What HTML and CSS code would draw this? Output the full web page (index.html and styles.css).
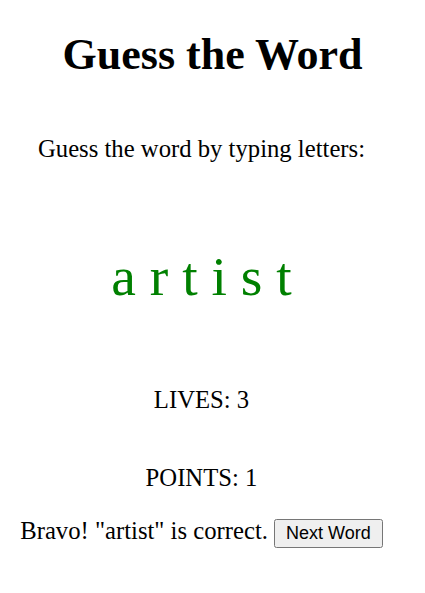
FILE: index.html
```html
<!DOCTYPE html>
<html>
<head>
<meta charset="utf-8">
<link rel="stylesheet" href="styles.css">
</head>
<body>
<div class="app">
  <h1 class="title">Guess the Word</h1>
  <div class="game">
    <p class="instructions">Guess the word by typing letters:</p>
    <div class="word">a r t i s t</div>
    <p class="lives">LIVES: 3</p>
    <p class="points">POINTS: 1</p>
    <p class="message">Bravo! "artist" is correct. <button class="next">Next Word</button></p>
  </div>
</div>
</body>
</html>
```
FILE: styles.css
```css
body {
  margin: 8px;
  font-family: "Liberation Serif", "Times New Roman", serif;
  background: #fff;
  color: #000;
}
.app {
  text-align: center;
}
.title {
  font-size: 44px;
  font-weight: bold;
  line-height: 50px;
  margin: 22px 0 0;
}
.game {
  margin-right: 22px;
  font-size: 24.7px;
  line-height: 28px;
}
.instructions {
  margin: 55px 0 0;
}
.word {
  font-size: 55.5px;
  line-height: 64px;
  color: green;
  margin: 82px 0 0;
}
.lives {
  margin: 77px 0 0;
}
.points {
  margin: 50px 0 0;
}
.message {
  margin: 25px 0 0;
}
.next {
  font-family: Arial, "Liberation Sans", sans-serif;
  font-size: 18px;
  line-height: 21px;
  padding: 2px 10px;
  vertical-align: baseline;
}
```
